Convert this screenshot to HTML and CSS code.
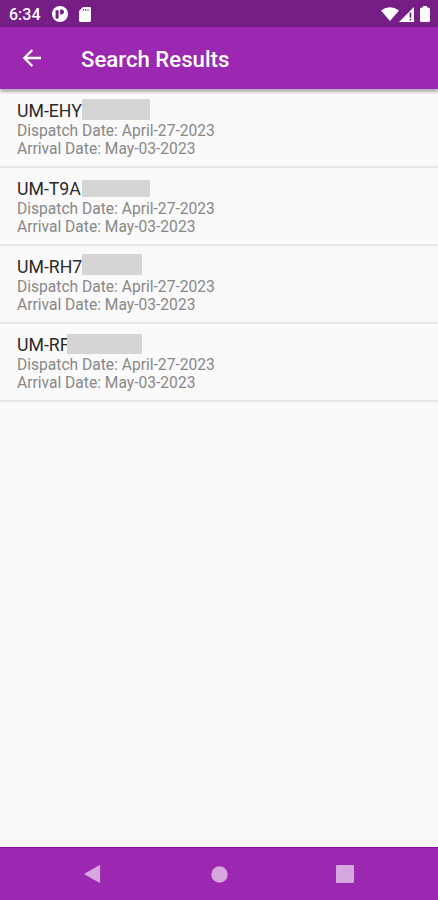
FILE: index.html
```html
<!DOCTYPE html>
<html lang="en">
<head>
    <meta charset="UTF-8">
    <meta name="viewport" content="width=device-width, initial-scale=1.0">
    <title>Search Results</title>
    <link rel="stylesheet" href="styles.css">
</head>
<body>
    <!-- Status bar -->
    <div class="status-bar">
        <span class="clock">6:34</span>
        <svg class="icon-app" width="16" height="16" viewBox="0 0 16 16">
            <circle cx="8" cy="8" r="8" fill="#fff"/>
            <path d="M3.6 4.2h3v8.4h-3z" fill="#771e86"/>
            <path d="M8.2 3.6h1.4a2.4 2.4 0 0 1 0 4.8H8.2z" fill="#771e86"/>
        </svg>
        <svg class="icon-sd" width="12" height="15" viewBox="0 0 12 15">
            <path d="M4 0h6.6Q12 0 12 1.4v12.2Q12 15 10.6 15H1.4Q0 15 0 13.6V4z" fill="#fff"/>
            <path d="M4.4 2v1.8M6.7 2v1.8M9 2v1.8" stroke="#771e86" stroke-width="1"/>
        </svg>
        <div class="status-right">
            <svg width="18" height="14" viewBox="0 0 18 14">
                <path d="M0 3.4Q9-3 18 3.4L9 14z" fill="#fff"/>
            </svg>
            <svg width="15" height="15" viewBox="0 0 15 15">
                <path d="M15 0v15H0z" fill="#fff"/>
                <path d="M11.4 5.6v5.2M11.4 12v1.6" stroke="#771e86" stroke-width="1.7"/>
            </svg>
            <svg class="icon-battery" width="10" height="16" viewBox="0 0 10 16">
                <path d="M3 0h4v1.6h1.2Q10 1.6 10 3.2v11.2Q10 16 8.4 16H1.6Q0 16 0 14.4V3.2Q0 1.6 1.8 1.6H3z" fill="#fff"/>
            </svg>
        </div>
    </div>

    <!-- App bar -->
    <header class="app-bar">
        <svg width="18" height="18" viewBox="0 0 18 18">
            <path d="M18 9H1.8M9.3 1L1.4 9l7.9 8" fill="none" stroke="#fff" stroke-width="2.3"/>
        </svg>
        <h1>Search Results</h1>
    </header>

    <!-- Results -->
    <main class="results">
        <div class="result">
            <div class="code">UM-EHY<span class="mask mask-1"></span></div>
            <div class="date">Dispatch Date: April-27-2023</div>
            <div class="date">Arrival Date: May-03-2023</div>
        </div>
        <div class="result">
            <div class="code">UM-T9A<span class="mask mask-2"></span></div>
            <div class="date">Dispatch Date: April-27-2023</div>
            <div class="date">Arrival Date: May-03-2023</div>
        </div>
        <div class="result">
            <div class="code">UM-RH7<span class="mask mask-3"></span></div>
            <div class="date">Dispatch Date: April-27-2023</div>
            <div class="date">Arrival Date: May-03-2023</div>
        </div>
        <div class="result">
            <div class="code">UM-RF<span class="mask mask-4"></span></div>
            <div class="date">Dispatch Date: April-27-2023</div>
            <div class="date">Arrival Date: May-03-2023</div>
        </div>
    </main>

    <!-- Navigation bar -->
    <nav class="nav-bar">
        <svg width="17" height="18" viewBox="0 0 17 18">
            <path d="M15.6.6v16.8L.8 9z" fill="#d7a8df" stroke="#d7a8df" stroke-linejoin="round"/>
        </svg>
        <svg class="icon-home" width="17" height="17" viewBox="0 0 17 17">
            <circle cx="8.5" cy="8.5" r="8.2" fill="#d7a8df"/>
        </svg>
        <svg width="18" height="18" viewBox="0 0 18 18">
            <rect width="18" height="18" rx="1.2" fill="#d7a8df"/>
        </svg>
    </nav>
</body>
</html>
```
FILE: styles.css
```css
body {
    margin: 0;
    height: 900px;
    display: flex;
    flex-direction: column;
    overflow: hidden;
    background-color: #fafafa;
    font-family: Roboto, sans-serif;
}

svg {
    display: block;
    flex: none;
}

.status-bar {
    box-sizing: border-box;
    height: 27px;
    flex: none;
    display: flex;
    align-items: center;
    padding: 1px 8px 0 9px;
    background-color: #771e86;
    color: white;
}

.clock {
    width: 43px;
    font-size: 16px;
    font-weight: 500;
}

.icon-sd {
    margin-left: 11px;
}

.status-right {
    margin-left: auto;
    display: flex;
    align-items: center;
}

.icon-battery {
    margin-left: 6px;
}

.app-bar {
    height: 62px;
    flex: none;
    display: flex;
    align-items: center;
    gap: 40px;
    padding-left: 23px;
    background-color: #9c27b0;
    box-shadow: 0 3px 3px rgba(0, 0, 0, 0.3);
    color: white;
    z-index: 1;
}

.app-bar h1 {
    margin: 2px 0 0;
    font-size: 22.2px;
    font-weight: 500;
}

.results {
    flex: 1;
    padding-top: 0.6px;
}

.result {
    box-sizing: border-box;
    height: 78.2px;
    padding: 11px 17px 0;
    border-bottom: 2px solid #e6e6e6;
}

.code {
    position: relative;
    font-size: 17.7px;
    line-height: 21px;
    color: #2a2a2a;
}

.date {
    font-size: 15.6px;
    line-height: 18px;
    color: #888;
}

/* Cover over the last characters of each code */
.mask {
    position: absolute;
    background-color: #d5d5d5;
}

.mask-1 { left: 65px; top: -2px; width: 68px; height: 21px; }
.mask-2 { left: 65px; top: 1px; width: 68px; height: 17px; }
.mask-3 { left: 65px; top: -3px; width: 60px; height: 21px; }
.mask-4 { left: 50px; top: -1px; width: 75px; height: 20px; }

.nav-bar {
    box-sizing: border-box;
    height: 53px;
    flex: none;
    display: flex;
    align-items: center;
    justify-content: space-between;
    padding: 0 84px;
    background-color: #9c27b0;
    border-top: 1px solid #8e0ba3;
}

.icon-home {
    margin-left: 2px;
}
```
